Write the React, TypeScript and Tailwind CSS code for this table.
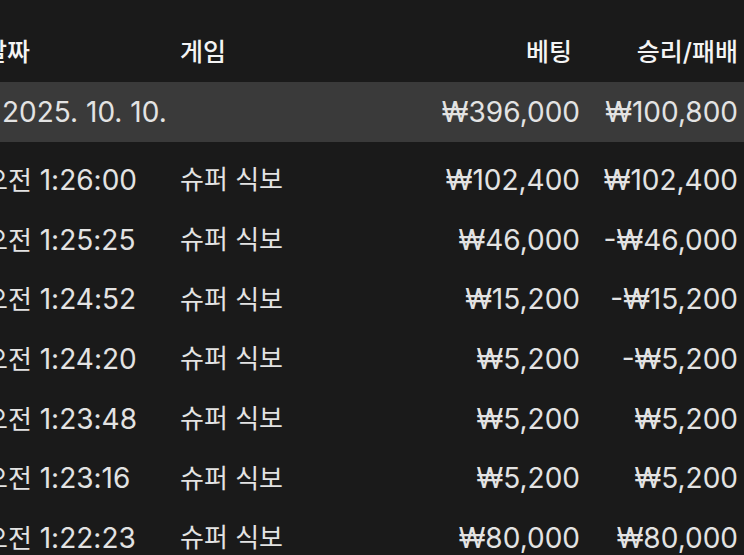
const ROWS = [
  { time: '1:26:00', bet: '₩102,400', result: '₩102,400' },
  { time: '1:25:25', bet: '₩46,000', result: '-₩46,000' },
  { time: '1:24:52', bet: '₩15,200', result: '-₩15,200' },
  { time: '1:24:20', bet: '₩5,200', result: '-₩5,200' },
  { time: '1:23:48', bet: '₩5,200', result: '₩5,200' },
  { time: '1:23:16', bet: '₩5,200', result: '₩5,200' },
  { time: '1:22:23', bet: '₩80,000', result: '₩80,000' },
];

const font = "font-['Inter','Noto_Sans_CJK_KR',sans-serif]";

const App = () => {
  return (
    <div className={`w-[744px] h-[555px] overflow-hidden bg-[#1a1a1a] text-[#e3e3e3] ${font}`}>
      <div className="ml-[-16px] w-[760px] pt-[23px]">
        {/* Header */}
        <div className="grid grid-cols-[196px_1fr_auto_158px] items-center h-[59px] pr-[6px] text-[#f4f4f4] text-[25px] font-medium">
          <span>날짜</span>
          <span>게임</span>
          <span className="text-right pr-[8px]">베팅</span>
          <span className="text-right">승리/패배</span>
        </div>

        {/* Day summary */}
        <div className="grid grid-cols-[196px_1fr_auto_158px] items-center h-[60px] mb-[8px] pr-[6px] bg-[#3a3a3a] text-[28px]">
          <span className="pl-[18px] whitespace-nowrap">2025. 10. 10.</span>
          <span />
          <span className="text-right">₩396,000</span>
          <span className="text-right">₩100,800</span>
        </div>

        {/* Bets */}
        {ROWS.map((r) => (
          <div
            key={r.time}
            className="grid grid-cols-[196px_1fr_auto_158px] items-center h-[59.7px] pr-[6px] text-[28px]"
          >
            <span className="whitespace-nowrap">
              <span className="text-[26px]">오전</span> {r.time}
            </span>
            <span className="text-[26px]">슈퍼 식보</span>
            <span className="text-right">{r.bet}</span>
            <span className="text-right">{r.result}</span>
          </div>
        ))}
      </div>
    </div>
  );
};

export default App;
